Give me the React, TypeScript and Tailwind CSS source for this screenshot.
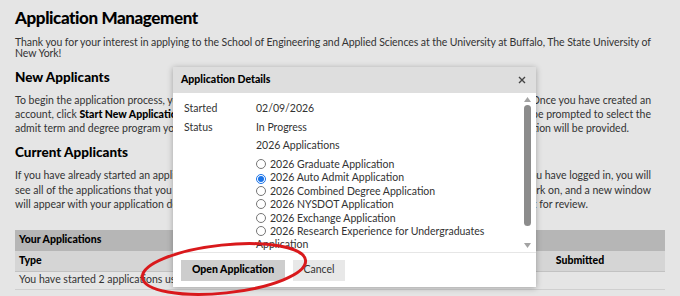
import React from 'react'

const apps = [
  { name: '2026 Graduate Application', checked: false },
  { name: '2026 Auto Admit Application', checked: true },
  { name: '2026 Combined Degree Application', checked: false },
  { name: '2026 NYSDOT Application', checked: false },
  { name: '2026 Exchange Application', checked: false },
  { name: '2026 Research Experience for Undergraduates', checked: false },
]

function Radio({ checked }: { checked: boolean }) {
  if (checked) {
    return (
      <span className="inline-flex items-center justify-center w-[10px] h-[10px] rounded-full border border-[#1a73e8] mr-[4px] align-[-1px]">
        <span className="w-[6px] h-[6px] rounded-full bg-[#1a73e8]" />
      </span>
    )
  }
  return <span className="inline-block w-[10px] h-[10px] rounded-full border border-[#767676] bg-white mr-[4px] align-[-1px]" />
}

// a wrapped line whose middle sits under the dialog
function Line({ left, right, pr = '' }: { left: React.ReactNode; right: React.ReactNode; pr?: string }) {
  return (
    <div className={`w-[636px] flex justify-between whitespace-nowrap ${pr}`}>
      <span>{left}</span>
      <span>{right}</span>
    </div>
  )
}

function Dialog() {
  return (
    <div className="absolute left-[173px] top-[67px] w-[363px] h-[220px] bg-white shadow-[0_1px_6px_rgba(0,0,0,0.3)] flex flex-col">
      <div className="h-[26px] bg-[#dedede] flex items-center justify-between pl-[8px] pr-[10px]">
        <span className="font-black text-[10.5px] text-black">Application Details</span>
        <svg width="8" height="8" viewBox="0 0 8 8">
          <path d="M1 1 L7 7 M7 1 L1 7" stroke="#444" strokeWidth="1.4" />
        </svg>
      </div>
      <div className="flex-1 flex min-h-0">
        <div className="flex-1 pl-[11px] pt-[6px] text-[10.5px] text-[#333] overflow-hidden">
          <div className="grid grid-cols-[72px_1fr] leading-[19px]">
            <span>Started</span>
            <span>02/09/2026</span>
            <span>Status</span>
            <span>In Progress</span>
          </div>
          <div className="pl-[72px] leading-[17px]">2026 Applications</div>
          <div className="pl-[72px] mt-[4px] leading-[13.4px] whitespace-nowrap">
            {apps.map((a) => (
              <div key={a.name}>
                <Radio checked={a.checked} />
                {a.name}
              </div>
            ))}
            <div>Application</div>
          </div>
        </div>
        <div className="w-[12px] flex flex-col items-center pt-[4px] pb-[4px] mr-[3px]">
          <svg width="7" height="5" viewBox="0 0 7 5"><path d="M0 5 L3.5 0 L7 5 Z" fill="#a3a3a3" /></svg>
          <div className="mt-[3px] w-[7px] h-[121px] rounded-full bg-[#8c8c8c]" />
          <div className="flex-1" />
          <svg width="7" height="5" viewBox="0 0 7 5"><path d="M0 0 L3.5 5 L7 0 Z" fill="#a3a3a3" /></svg>
        </div>
      </div>
      <div className="h-[35px] border-t border-[#e6e6e6] flex items-center gap-[8px] px-[8px]">
        <button className="h-[21px] w-[104px] bg-[#cdcdcd] font-black text-[10.5px] text-black">Open Application</button>
        <button className="h-[21px] w-[52px] bg-[#e8e8e8] text-[10.5px] text-[#333]">Cancel</button>
      </div>
    </div>
  )
}

export default function App() {
  return (
    <div className="relative w-[680px] h-[296px] overflow-hidden bg-[#e5e5e5] font-['Lato',sans-serif] text-[#333]">
      <div className="px-[15px] pt-[5px]">
        <h1 className="text-[17px] leading-[26px] font-black tracking-[-0.4px] text-black">Application Management</h1>
        <p className="mt-[6px] text-[10.5px] leading-[11px] tracking-[-0.07px] whitespace-nowrap">
          Thank you for your interest in applying to the School of Engineering and Applied Sciences at the University at Buffalo, The State University of
          <br />
          New York!
        </p>
        <h2 className="mt-[9px] text-[13.5px] leading-[18px] font-black text-black">New Applicants</h2>
        <div className="mt-[7px] text-[10.5px] leading-[14px]">
          <Line left="To begin the application process, you will need to" right="create an account. Once you have created an" />
          <Line
            left={<>account, click <b className="font-black text-black">Start New Application</b> and select the</>}
            right="application type. You will be prompted to select the"
          />
          <Line
            left="admit term and degree program you are applying to,"
            right="and instructions for completing your application will be provided."
            pr="pr-[22px]"
          />
        </div>
        <h2 className="mt-[8px] text-[13.5px] leading-[18px] font-black text-black">Current Applicants</h2>
        <div className="mt-[7px] text-[10.5px] leading-[14.5px]">
          <Line left="If you have already started an application, log in" right="with your email and password. Once you have logged in, you will" />
          <Line left="see all of the applications that you have started." right="Select the one you wish to work on, and a new window" />
          <Line left="will appear with your application details." right="You may continue it or submit it for review." pr="pr-[63px]" />
        </div>
        <div className="mt-[18px] text-[10.5px]">
          <div className="h-[21px] bg-[#b6b6b6] flex items-center px-[4px] font-black text-black">Your Applications</div>
          <div className="h-[21px] bg-[#d5d5d5] border-b border-[#c2c2c2] grid grid-cols-[1fr_120px_162px] items-center px-[4px] font-black text-black">
            <span>Type</span>
            <span>Started</span>
            <span className="text-center">Submitted</span>
          </div>
          <div className="h-[18px] border-b border-[#cfcfcf] flex items-center px-[4px]">
            You have started 2 applications using this account.
          </div>
        </div>
      </div>
      <Dialog />
      <svg className="absolute left-0 top-0 pointer-events-none" width="680" height="296" viewBox="0 0 680 296">
        <ellipse cx="224" cy="269" rx="82" ry="24" transform="rotate(-6 224 269)" fill="none" stroke="#d9191c" strokeWidth="3" />
      </svg>
    </div>
  )
}
